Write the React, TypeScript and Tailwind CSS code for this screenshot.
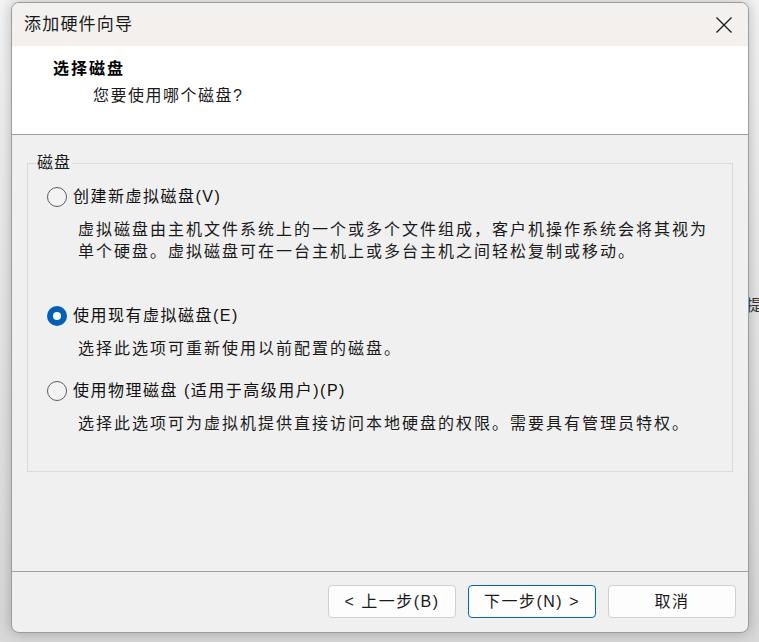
import React from "react";

const FONT = { fontFamily: '"Liberation Sans", "Noto Sans CJK SC", sans-serif' };

function Radio({ checked }: { checked?: boolean }) {
  if (checked) {
    return (
      <span className="flex h-[20px] w-[20px] shrink-0 items-center justify-center rounded-full bg-[#005fb8]">
        <span className="h-[8px] w-[8px] rounded-full bg-white" />
      </span>
    );
  }
  return <span className="h-[20px] w-[20px] shrink-0 rounded-full border border-[#5d5d5d] bg-[#f3f3f3]" />;
}

function Option({
  label,
  desc,
  checked,
  className,
}: {
  label: string;
  desc: string[];
  checked?: boolean;
  className?: string;
}) {
  return (
    <div className={className}>
      <div className="flex h-[22px] items-center pl-[19px]">
        <Radio checked={checked} />
        <span className="ml-[6px] text-[16px] leading-[22px] tracking-[1.5px] text-[#111]">{label}</span>
      </div>
      <div className="mt-[11px] pl-[50px] text-[16px] leading-[22px] tracking-[2px] text-[#1a1a1a]">
        {desc.map((d) => (
          <div key={d}>{d}</div>
        ))}
      </div>
    </div>
  );
}

export default function App() {
  return (
    <div
      className="relative h-[642px] w-[759px] overflow-hidden bg-gradient-to-b from-[#f4f4f4] to-[#d8d8d8] pl-[11px] pt-[2px]"
      style={FONT}
    >
      <span className="absolute left-[746px] top-[294px] text-[16px] text-[#333]">提</span>
      <div className="relative flex h-[631px] w-[738px] flex-col overflow-hidden rounded-[8px] border border-[#9c9c9c] bg-[#f0f0f0] shadow-[0_0_14px_rgba(0,0,0,0.25)]">
        {/* Title bar */}
        <div className="flex h-[43px] shrink-0 items-center justify-between bg-[#f3f0ee] pl-[12px] pr-[15px]">
          <span className="text-[17px] tracking-[1.2px] text-[#1a1a1a]">添加硬件向导</span>
          <svg width="16" height="16" viewBox="0 0 16 16" className="mr-[1px]">
            <path d="M0.5 0.5 L15.5 15.5 M15.5 0.5 L0.5 15.5" stroke="#1a1a1a" strokeWidth="1.3" fill="none" />
          </svg>
        </div>
        {/* Header */}
        <div className="h-[89px] shrink-0 border-b border-[#a0a0a0] bg-white">
          <div className="pl-[41px] pt-[12px] text-[16px] font-bold leading-[22px] tracking-[2px] text-black">选择磁盘</div>
          <div className="pl-[81px] pt-[5px] text-[16px] leading-[22px] tracking-[1.5px] text-[#1a1a1a]">您要使用哪个磁盘?</div>
        </div>
        {/* Body */}
        <div className="h-[437px] shrink-0 border-b border-[#a0a0a0] px-[15px] pt-[28px]">
          <div className="relative h-[309px] border border-[#dadada] pt-[22px]">
            <span className="absolute left-[8px] top-[-12px] bg-[#f0f0f0] px-[1px] text-[16px] leading-[22px] tracking-[1px] text-[#1a1a1a]">
              磁盘
            </span>
            <Option
              label="创建新虚拟磁盘(V)"
              desc={[
                "虚拟磁盘由主机文件系统上的一个或多个文件组成，客户机操作系统会将其视为",
                "单个硬盘。虚拟磁盘可在一台主机上或多台主机之间轻松复制或移动。",
              ]}
            />
            <Option
              className="mt-[42px]"
              checked
              label="使用现有虚拟磁盘(E)"
              desc={["选择此选项可重新使用以前配置的磁盘。"]}
            />
            <Option
              className="mt-[20px]"
              label="使用物理磁盘 (适用于高级用户)(P)"
              desc={["选择此选项可为虚拟机提供直接访问本地硬盘的权限。需要具有管理员特权。"]}
            />
          </div>
        </div>
        {/* Footer */}
        <div className="flex flex-1 items-start justify-end gap-[12px] pr-[12px] pt-[13px]">
          <button className="h-[33px] w-[128px] rounded-[4px] border border-[#d0d0d0] bg-[#fdfdfd] text-[16px] tracking-[1.5px] text-[#1a1a1a]">
            &lt; 上一步(B)
          </button>
          <button className="h-[33px] w-[128px] rounded-[4px] border border-[#0067c0] bg-[#fdfdfd] text-[16px] tracking-[1.5px] text-[#1a1a1a]">
            下一步(N) &gt;
          </button>
          <button className="h-[33px] w-[128px] rounded-[4px] border border-[#d0d0d0] bg-[#fdfdfd] text-[16px] tracking-[1.5px] text-[#1a1a1a]">
            取消
          </button>
        </div>
      </div>
    </div>
  );
}
